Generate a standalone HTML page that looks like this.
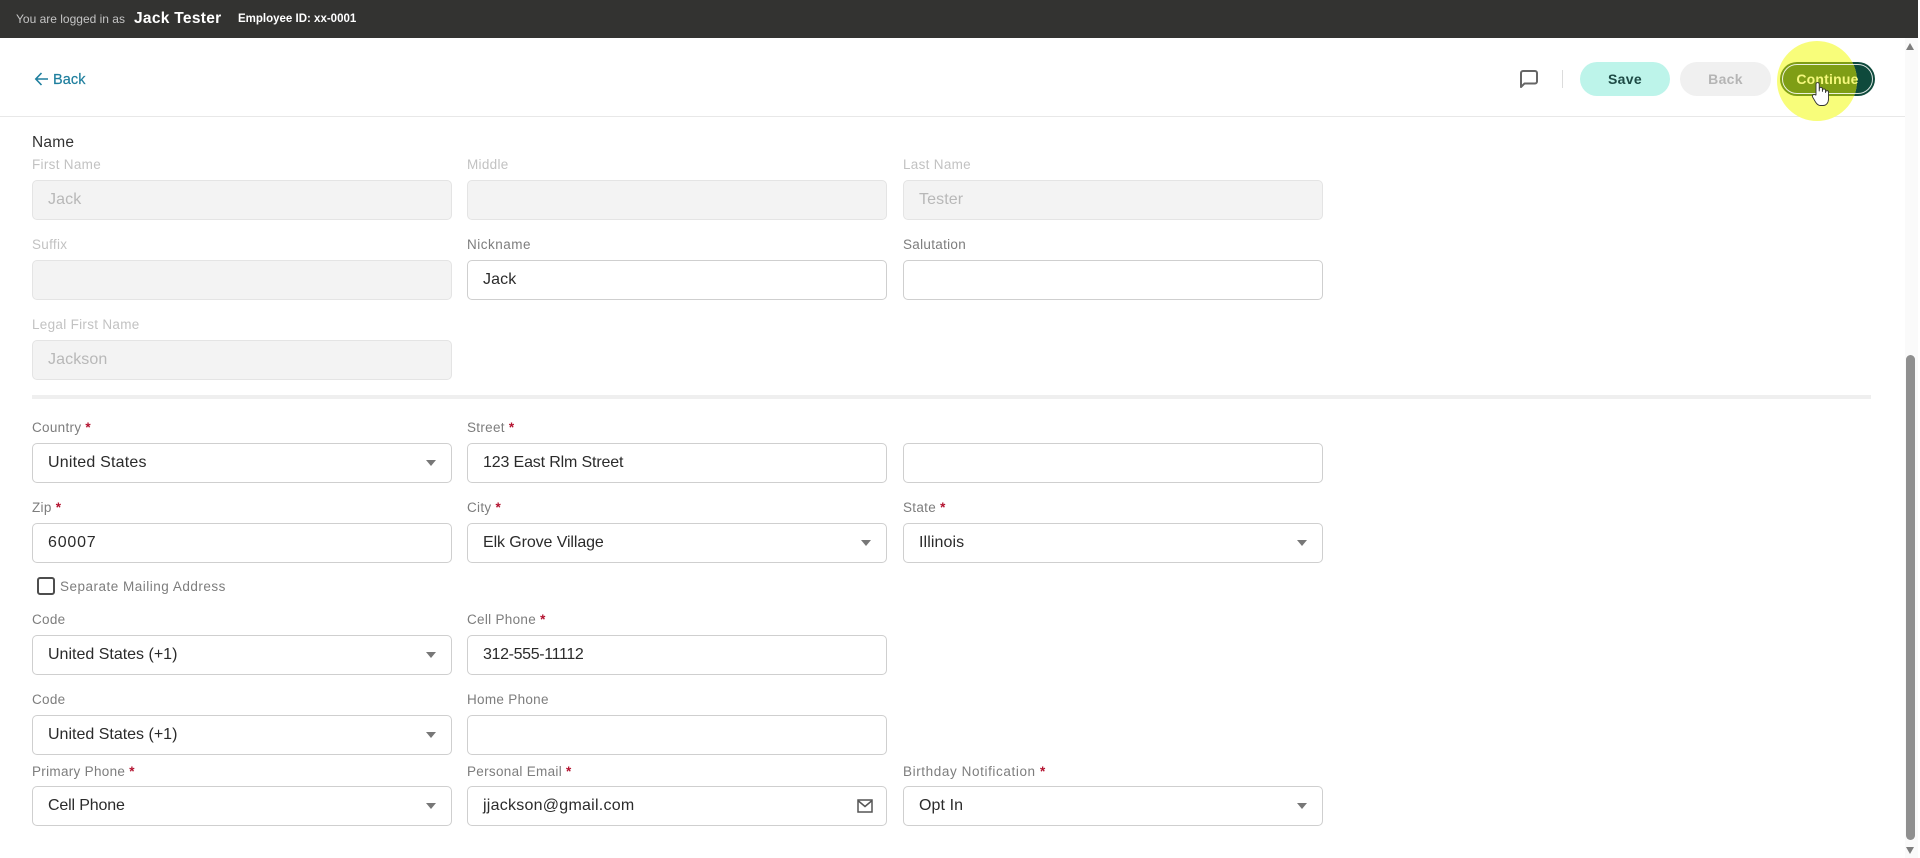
<!DOCTYPE html>
<html><head><meta charset="utf-8"><style>
html,body{margin:0;padding:0;background:#fff;width:1920px;height:858px;overflow:hidden}
body{position:relative;font-family:"Liberation Sans",sans-serif}
.a{position:absolute;white-space:nowrap}
.l{position:absolute;font-size:13.5px;line-height:16px;color:#7d7d7d;white-space:nowrap;letter-spacing:.3px}
.l.d{color:#c2c2c2}
.l i{color:#b3122f;font-style:normal;font-weight:bold}
.f{position:absolute;height:38px;width:417.5px;border:1px solid #cfcfcf;border-radius:5px;background:#fff;box-sizing:content-box;font-size:16px;line-height:38px;color:#2b2b2b;text-indent:15px;letter-spacing:.1px;white-space:nowrap}
.f.d{background:#f3f3f3;border-color:#e4e4e4;color:#b8b8b8}
.f.s:after{content:"";position:absolute;right:15px;top:16px;border-left:5px solid transparent;border-right:5px solid transparent;border-top:6px solid #777}
.c1{left:32px}.c2{left:467px}.c3{left:903px}
</style></head><body>
<div class="a" style="left:0;top:0;width:1918px;height:38px;background:#333331"></div>
<div class="a" style="left:16px;top:11px;font-size:12px;line-height:16px;color:#c4c4c4">You are logged in as</div>
<div class="a" style="left:134px;top:9px;font-size:15.5px;line-height:19px;color:#fff;font-weight:bold;letter-spacing:.3px">Jack Tester</div>
<div class="a" style="left:238px;top:11px;font-size:11.5px;line-height:16px;color:#fff;font-weight:bold">Employee ID: xx-0001</div>

<div class="a" style="left:0;top:116px;width:1906px;height:1px;background:#e8e8e8"></div>
<svg class="a" style="left:34px;top:71px" width="15" height="16" viewBox="0 0 15 16"><path d="M14 8H2M7.500 2 1.800 8 7.500 14" fill="none" stroke="#1f7f9e" stroke-width="1.600"/></svg>
<div class="a" style="left:53px;top:71px;font-size:14.5px;line-height:18px;color:#1f7f9e;font-weight:500;letter-spacing:.1px;-webkit-text-stroke:.2px #1f7f9e">Back</div>

<svg class="a" style="left:1519px;top:69px" width="20" height="20" viewBox="0 0 20 20"><path d="M2 18V4a2 2 0 0 1 2-2h12a2 2 0 0 1 2 2v8.500a2 2 0 0 1-2 2H5.500z" fill="none" stroke="#666" stroke-width="2" stroke-linejoin="round"/></svg>
<div class="a" style="left:1562px;top:70px;width:1px;height:18px;background:#dcdcdc"></div>
<div class="a" style="left:1580px;top:62px;width:90px;height:34px;border-radius:17px;background:#bdf4ea;text-align:center;font-size:14px;line-height:34px;font-weight:bold;color:#1d4a45;letter-spacing:.3px">Save</div>
<div class="a" style="left:1680px;top:62px;width:91px;height:34px;border-radius:17px;background:#f0f0f0;text-align:center;font-size:14px;line-height:34px;font-weight:bold;color:#b5b5b5;letter-spacing:.3px">Back</div>

<div class="a" style="left:1780px;top:62px;width:95px;height:34px;border-radius:17px;background:#0f4a3c"></div>
<div class="a" style="left:1777px;top:41px;width:80px;height:80px;border-radius:50%;background:#f8fd7a"></div>
<svg class="a" style="left:1777px;top:41px" width="80" height="80" viewBox="0 0 80 80"><defs><clipPath id="k"><circle cx="40" cy="40" r="40"/></clipPath></defs><g clip-path="url(#k)"><rect x="3" y="21" width="95" height="34" rx="17" fill="#7f9e15"/></g></svg>
<div class="a" style="left:1782px;top:64px;width:91px;height:30px;border-radius:15px;border:1.500px solid #fff;box-sizing:border-box;opacity:.85"></div>
<div class="a" style="left:1780px;top:62px;width:95px;height:34px;text-align:center;font-size:14px;line-height:34px;font-weight:bold;color:#f4f77c;letter-spacing:.2px">Continue</div>
<svg class="a" style="left:1811px;top:81px" width="20" height="26" viewBox="0 0 20 26"><path d="M5 14V3.200a1.600 1.600 0 0 1 3.200 0V10l.2-2.200a1.500 1.500 0 0 1 3 0V10.500l.2-1.500a1.500 1.500 0 0 1 2.900.2V11.500l.3-.9a1.400 1.400 0 0 1 2.700.4V18c0 3.500-2 6.500-5.500 6.500H9.500c-2.500 0-3.800-1.500-5-3.500L1.600 16a1.700 1.700 0 0 1 2.600-2.100z" fill="#fff" stroke="#333" stroke-width=".9" stroke-linejoin="round"/></svg>

<div class="a" style="left:32px;top:133px;font-size:15.5px;line-height:19px;color:#333;letter-spacing:.2px">Name</div>
<div class="l d c1" style="top:157px">First Name</div><div class="l d c2" style="top:157px">Middle</div><div class="l d c3" style="top:157px">Last Name</div>
<div class="f d c1" style="top:180px">Jack</div><div class="f d c2" style="top:180px"></div><div class="f d c3" style="top:180px">Tester</div>

<div class="l d c1" style="top:237px">Suffix</div><div class="l c2" style="top:237px;letter-spacing:.5px">Nickname</div><div class="l c3" style="top:237px">Salutation</div>
<div class="f d c1" style="top:260px"></div><div class="f c2" style="top:260px">Jack</div><div class="f c3" style="top:260px"></div>

<div class="l d c1" style="top:317px">Legal First Name</div>
<div class="f d c1" style="top:340px">Jackson</div>

<div class="a" style="left:32px;top:395px;width:1839px;height:4px;background:#efefef"></div>

<div class="l c1" style="top:420px">Country <i>*</i></div><div class="l c2" style="top:420px">Street <i>*</i></div>
<div class="f s c1" style="top:443px;letter-spacing:.2px">United States</div><div class="f c2" style="top:443px;letter-spacing:-.15px">123 East Rlm Street</div><div class="f c3" style="top:443px"></div>

<div class="l c1" style="top:500px">Zip <i>*</i></div><div class="l c2" style="top:500px">City <i>*</i></div><div class="l c3" style="top:500px">State <i>*</i></div>
<div class="f c1" style="top:523px;letter-spacing:.8px">60007</div><div class="f s c2" style="top:523px;letter-spacing:-.1px">Elk Grove Village</div><div class="f s c3" style="top:523px">Illinois</div>

<div class="a" style="left:37px;top:577px;width:18px;height:18px;border:2px solid #4d4d4d;border-radius:3px;box-sizing:border-box"></div>
<div class="l" style="left:60px;top:579px;letter-spacing:.5px">Separate Mailing Address</div>

<div class="l c1" style="top:612px">Code</div><div class="l c2" style="top:612px">Cell Phone <i>*</i></div>
<div class="f s c1" style="top:635px;letter-spacing:0">United States (+1)</div><div class="f c2" style="top:635px;letter-spacing:-.35px">312-555-11112</div>

<div class="l c1" style="top:692px">Code</div><div class="l c2" style="top:692px">Home Phone</div>
<div class="f s c1" style="top:715px;letter-spacing:0">United States (+1)</div><div class="f c2" style="top:715px"></div>

<div class="l c1" style="top:764px">Primary Phone <i>*</i></div><div class="l c2" style="top:764px">Personal Email <i>*</i></div><div class="l c3" style="top:764px;letter-spacing:.6px">Birthday Notification <i>*</i></div>
<div class="f s c1" style="top:786px;letter-spacing:-.15px">Cell Phone</div><div class="f c2" style="top:786px;letter-spacing:.25px">jjackson@gmail.com</div><div class="f s c3" style="top:786px">Opt In</div>
<svg class="a" style="left:857px;top:799px" width="16" height="14" viewBox="0 0 16 14"><rect x="1" y="1" width="14" height="12" fill="none" stroke="#555" stroke-width="1.500"/><path d="M1.500 2 8 7.500 14.500 2" fill="none" stroke="#555" stroke-width="1.500"/></svg>

<div class="a" style="left:1905px;top:38px;width:13px;height:820px;background:#fafafa"></div>
<div class="a" style="left:1906px;top:355px;width:9px;height:485px;border-radius:5px;background:#8f8f8f"></div>
<div class="a" style="left:1906px;top:43px;border-left:4.500px solid transparent;border-right:4.500px solid transparent;border-bottom:7px solid #7d7d7d"></div>
<div class="a" style="left:1906px;top:847px;border-left:4.500px solid transparent;border-right:4.500px solid transparent;border-top:7px solid #7d7d7d"></div>
</body></html>
